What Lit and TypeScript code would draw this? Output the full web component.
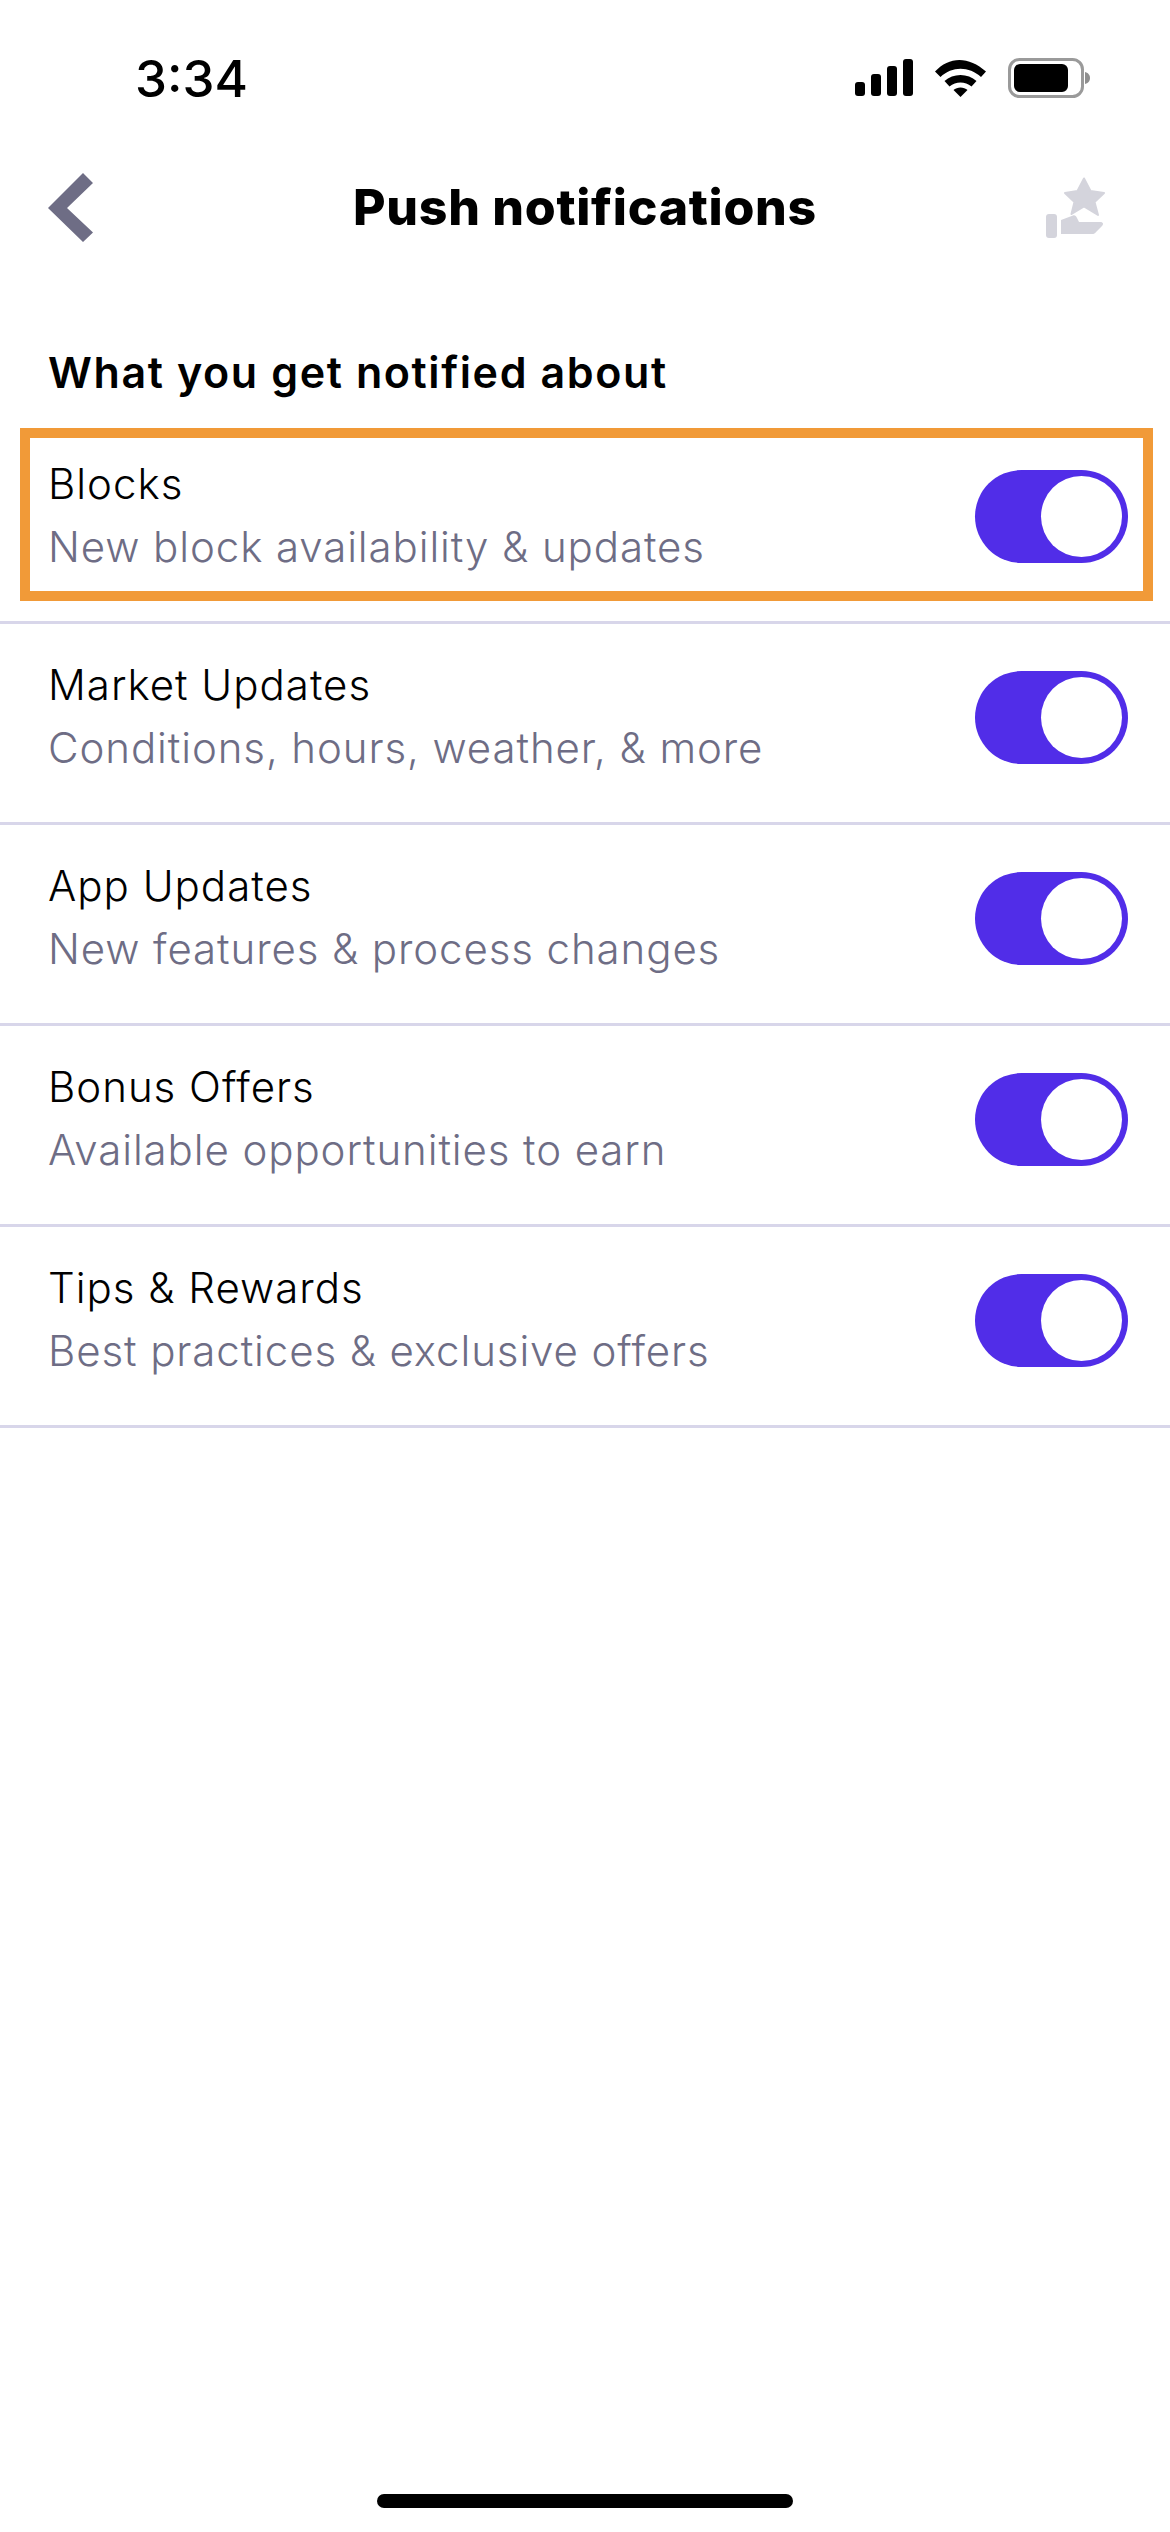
import { LitElement, html, css, svg } from "lit";
import { customElement } from "lit/decorators.js";

const rows = [
  ["Blocks", "New block availability & updates"],
  ["Market Updates", "Conditions, hours, weather, & more"],
  ["App Updates", "New features & process changes"],
  ["Bonus Offers", "Available opportunities to earn"],
  ["Tips & Rewards", "Best practices & exclusive offers"],
];

@customElement("app-root")
export class AppRoot extends LitElement {
  static styles = css`
    :host { display: block; width: 1170px; height: 2532px; background: #fff; color: #000; font-family: "Inter", sans-serif; }
    .page { height: 2532px; display: flex; flex-direction: column; overflow: hidden; }
    .status { height: 140px; flex: none; display: flex; justify-content: space-between; align-items: flex-start; padding: 51px 79px 0 135px; box-sizing: border-box; }
    .time { font-size: 51px; line-height: 56px; font-weight: 500; }
    .status-icons { display: flex; align-items: flex-start; margin-top: 6px; }
    .status-icons svg { display: block; }
    .nav { height: 134px; flex: none; display: grid; grid-template-columns: 1fr auto 1fr; align-items: center; padding: 0 48px; box-sizing: border-box; }
    .nav svg { display: block; }
    .nav .action { justify-self: end; margin-right: 15px; }
    .title { font-size: 50px; font-weight: 800; letter-spacing: 0.7px; line-height: 60px; }
    .section { flex: none; padding-left: 48px; font-size: 43px; letter-spacing: 1.6px; font-weight: 600; line-height: 56px; margin: 70px 0 23px; }
    .list { display: flex; flex-direction: column; }
    .row { position: relative; height: 201px; box-sizing: border-box; border-bottom: 3px solid #d8d6ea; display: flex; align-items: center; justify-content: space-between; padding: 0 42px 0 48px; }
    .row.hl::after { content: ""; position: absolute; left: 20px; top: 5px; width: 1133px; height: 173px; border: 10px solid #f19a38; box-sizing: border-box; pointer-events: none; }
    .text { padding-bottom: 14px; }
    .name { font-size: 42px; letter-spacing: 1px; line-height: 58px; font-weight: 300; color: #000; }
    .sub { font-size: 42px; letter-spacing: 0.9px; line-height: 58px; font-weight: 300; color: #6e6d85; margin-top: 5px; }
    .toggle { width: 153px; height: 93px; border-radius: 47px; background: #512de8; box-sizing: border-box; padding: 6px; display: flex; justify-content: flex-end; flex: none; margin-bottom: 11px; }
    .knob { width: 81px; height: 81px; border-radius: 50%; background: #fff; }
    .spacer { flex: 1; }
    .home { flex: none; align-self: center; width: 416px; height: 14px; border-radius: 7px; background: #000; margin-bottom: 24px; }
  `;

  render() {
    return html`<div class="page">
      <div class="status">
        <div class="time">3:34</div>
        <div class="status-icons">
          <svg width="240" height="44" viewBox="0 0 240 44">
            ${svg`
            <rect x="4" y="25" width="10" height="14" rx="3"/>
            <rect x="20" y="17" width="10" height="22" rx="3"/>
            <rect x="36" y="9" width="10" height="30" rx="3"/>
            <rect x="52" y="2" width="10" height="37" rx="3"/>
            <path d="M84 14.5 C98 -1 118 -1 135 14.5 L130 20 C118 9 101 9 89.500 20 Z"/>
            <path d="M93.500 24 C102 16 117 16 125.500 24 L120.500 29.500 C114 24 105 24 98.500 29.500 Z"/>
            <path d="M102.500 33 C106 29.500 113 29.500 116.500 33 L109.500 40 Z"/>
            <rect x="158.500" y="2.500" width="73" height="37" rx="10" fill="none" stroke="#9a9a9a" stroke-width="3"/>
            <rect x="163" y="7" width="54" height="28" rx="6"/>
            <path d="M234 15 C238 16 239 19 239 21 C239 23 238 26 234 27 Z" fill="#8e8e8e"/>
            `}
          </svg>
        </div>
      </div>
      <div class="nav">
        <svg width="45" height="69" viewBox="0 0 45 69"><path d="M35 0 L45 10 L19 35 L45 59.500 L35 69 L0 35 Z" fill="#6e6d85"/></svg>
        <div class="title">Push notifications</div>
        <svg class="action" width="61" height="61" viewBox="0 0 61 61"><g fill="#d4d4dc">
          <path d="M38 1.500 L44.500 14 L58 16 L48.500 25 L52 38 L38 29.500 L25.500 37 L28.500 25 L19 16 L31.500 14 Z" stroke="#d4d4dc" stroke-width="2" stroke-linejoin="round"/>
          <rect x="0" y="37" width="11" height="24" rx="3"/>
          <path d="M15 43 L27 38.500 C29 38 30 39 31 41 L33 45 L54 45 C57 45 58 47 56 49 L50 55 C49 56.500 48 57 46 57 L15 57 Z"/>
        </g></svg>
      </div>
      <div class="section">What you get notified about</div>
      <div class="list">
        ${rows.map(
          ([a, b], i) => html`<div class="row ${i === 0 ? "hl" : ""}">
            <div class="text">
              <div class="name">${a}</div>
              <div class="sub">${b}</div>
            </div>
            <div class="toggle"><div class="knob"></div></div>
          </div>`
        )}
      </div>
      <div class="spacer"></div>
      <div class="home"></div>
    </div>`;
  }
}
